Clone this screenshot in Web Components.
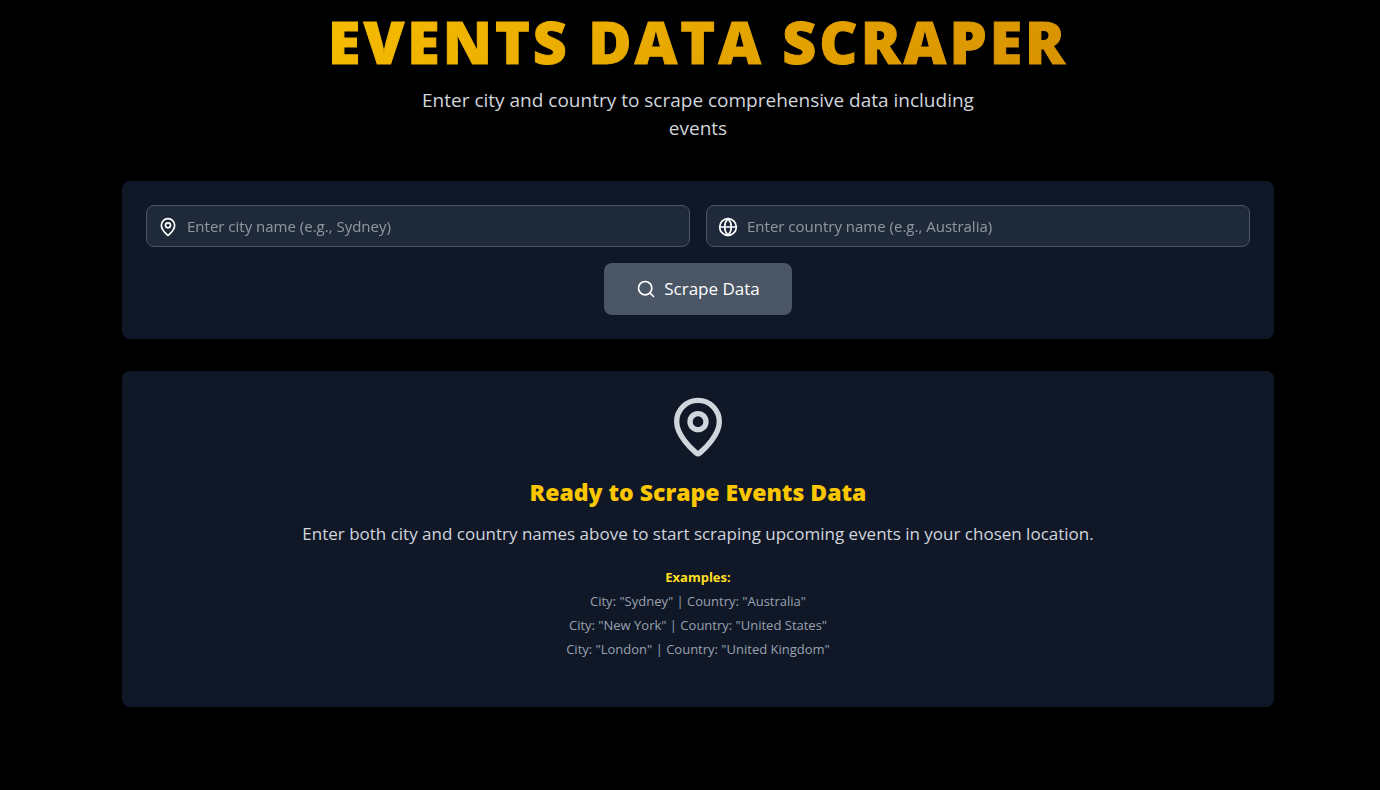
<!DOCTYPE html>
<html lang="en">
<head>
<meta charset="utf-8">
<meta name="viewport" content="width=device-width, initial-scale=1">
<title>Events Data Scraper</title>
<style>
  :root {
    --card: #101828;
    --field: #1e2939;
    --line: #4a5565;
    --muted: #99a1af;
    --soft: #d1d5dc;
    --gold: #fdc700;
    --gold-bright: #ffdf20;
    --gold-deep: #d08700;
  }
  body {
    margin: 0;
    min-height: 100vh;
    background: #000;
    color: #fff;
    font-family: "Segoe UI", "Open Sans", "Noto Sans", sans-serif;
  }
</style>
</head>
<body>
<scraper-page>
  <page-header slot="header" heading="EVENTS DATA SCRAPER">Enter city and country to scrape comprehensive data including events</page-header>
  <panel-card>
    <search-form></search-form>
  </panel-card>
  <panel-card>
    <empty-state heading="Ready to Scrape Events Data">
      Enter both city and country names above to start scraping upcoming events in your chosen location.
      <example-list slot="examples">
        <li>City: "Sydney" | Country: "Australia"</li>
        <li>City: "New York" | Country: "United States"</li>
        <li>City: "London" | Country: "United Kingdom"</li>
      </example-list>
    </empty-state>
  </panel-card>
</scraper-page>

<script>
  class BaseElement extends HTMLElement {
    constructor() {
      super();
      const template = document.createElement('template');
      template.innerHTML = this.render();
      this.attachShadow({ mode: 'open' }).append(template.content.cloneNode(true));
    }
  }

  const ICONS = {
    pin: '<path d="M20 10c0 4.993-5.539 10.193-7.399 11.799a1 1 0 0 1-1.202 0C9.539 20.193 4 14.993 4 10a8 8 0 0 1 16 0"/><circle cx="12" cy="10" r="3"/>',
    globe: '<circle cx="12" cy="12" r="10"/><path d="M12 2a14.5 14.5 0 0 0 0 20 14.5 14.5 0 0 0 0-20"/><path d="M2 12h20"/>',
    search: '<circle cx="11" cy="11" r="8"/><path d="m21 21-4.3-4.3"/>'
  };

  customElements.define('line-icon', class extends BaseElement {
    render() {
      return `<style>
        :host { display: block; flex: none; width: 20px; height: 20px; }
        svg { display: block; width: 100%; height: 100%; }
      </style>
      <svg viewBox="0 0 24 24" fill="none" stroke="currentColor" stroke-width="2" stroke-linecap="round" stroke-linejoin="round" aria-hidden="true">${ICONS[this.getAttribute('name')]}</svg>`;
    }
  });

  customElements.define('scraper-page', class extends BaseElement {
    render() {
      return `<style>
        :host { display: block; padding: 11px 16px 40px 32px; }
        main { display: grid; gap: 32px; max-width: 1152px; margin: 0 auto; }
        header { margin-bottom: 7px; }
      </style>
      <main><header><slot name="header"></slot></header><slot></slot></main>`;
    }
  });

  customElements.define('page-header', class extends BaseElement {
    render() {
      return `<style>
        :host { display: block; text-align: center; }
        h1 {
          margin: 0 0 15px;
          font-size: 59px; line-height: 60px; font-weight: 800; letter-spacing: 3px;
          -webkit-text-stroke: 1px transparent;
          background: linear-gradient(135deg, var(--gold), var(--gold-deep));
          background-clip: text; -webkit-background-clip: text;
          color: transparent;
        }
        p { max-width: 576px; margin: 0 auto; font-size: 19px; line-height: 28px; color: var(--soft); }
      </style>
      <h1>${this.getAttribute('heading')}</h1>
      <p><slot></slot></p>`;
    }
  });

  customElements.define('panel-card', class extends BaseElement {
    render() {
      return `<style>
        :host { display: block; padding: 24px; border-radius: 8px; background: var(--card); }
      </style><slot></slot>`;
    }
  });

  customElements.define('icon-field', class extends BaseElement {
    render() {
      const hint = this.getAttribute('hint');
      return `<style>
        :host { display: block; flex: 1 1 240px; }
        label {
          display: flex; align-items: center; gap: 9px; padding: 0 12px 0 11px;
          border: 1px solid var(--line); border-radius: 8px; background: var(--field);
        }
        label:focus-within { border-color: var(--gold); }
        line-icon { margin-top: 2px; }
        input {
          flex: 1; min-width: 0; height: 40px; margin: 0; padding: 0; border: 0; outline: 0;
          background: none; color: #fff; font: inherit; font-size: 15px;
        }
        input::placeholder { color: #fff; opacity: .5; }
      </style>
      <label><line-icon name="${this.getAttribute('icon')}"></line-icon><input type="text" aria-label="${this.getAttribute('label')}" placeholder="${hint}"></label>`;
    }
  });

  customElements.define('search-form', class extends BaseElement {
    render() {
      return `<style>
        :host { display: block; }
        form { display: grid; gap: 16px; margin: 0; }
        .fields { display: flex; flex-wrap: wrap; gap: 16px; }
        button {
          justify-self: center; display: flex; align-items: center; gap: 8px;
          padding: 12px 32px; border: 0; border-radius: 8px;
          background: var(--line); color: #fff;
          font: inherit; font-size: 17px; line-height: 28px; cursor: pointer;
        }
      </style>
      <form>
        <div class="fields">
          <icon-field icon="pin" label="City" hint="Enter city name (e.g., Sydney)"></icon-field>
          <icon-field icon="globe" label="Country" hint="Enter country name (e.g., Australia)"></icon-field>
        </div>
        <button type="button"><line-icon name="search"></line-icon>Scrape Data</button>
      </form>`;
    }
  });

  customElements.define('empty-state', class extends BaseElement {
    render() {
      return `<style>
        :host { display: block; text-align: center; padding-bottom: 24px; }
        line-icon { width: 64px; height: 64px; margin: 0 auto 17px; color: var(--soft); }
        h2 { margin: 0 0 12px; font-size: 23px; line-height: 32px; font-weight: 800; color: var(--gold); }
        p { margin: 0 0 19px; font-size: 17px; line-height: 28px; color: var(--soft); }
      </style>
      <line-icon name="pin"></line-icon>
      <h2>${this.getAttribute('heading')}</h2>
      <p><slot></slot></p>
      <slot name="examples"></slot>`;
    }
  });

  customElements.define('example-list', class extends BaseElement {
    render() {
      return `<style>
        :host { display: block; font-size: 13px; line-height: 20px; color: var(--muted); }
        h3 { margin: 0 0 4px; font-size: inherit; font-weight: 700; color: var(--gold-bright); }
        ul { display: grid; gap: 4px; margin: 0; padding: 0; list-style: none; }
        ::slotted(li) { display: block; }
      </style>
      <h3>Examples:</h3>
      <ul><slot></slot></ul>`;
    }
  });
</script>
</body>
</html>
